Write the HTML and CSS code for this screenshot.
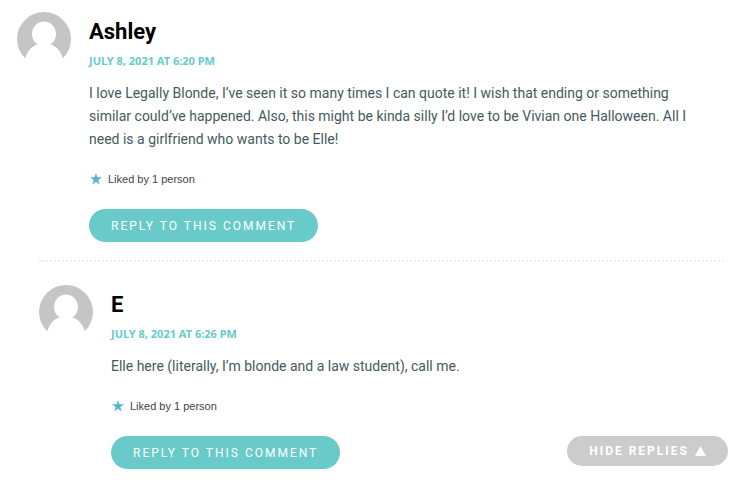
FILE: index.html
```html
<!DOCTYPE html>
<html lang="en">
<head>
  <meta charset="UTF-8">
  <meta name="viewport" content="width=device-width, initial-scale=1.0">
  <title>Comments</title>
  <link rel="stylesheet" href="styles.css">
</head>
<body>
  <article class="comment">
    <svg class="avatar" viewBox="0 0 54 54" aria-hidden="true">
      <circle cx="27" cy="27" r="27" fill="#c5c5c5"/>
      <ellipse cx="27" cy="22" rx="12" ry="12.500" fill="#fff"/>
      <path fill="#fff" d="M8 47C10 40 14 34.500 20 32.500h14C40 34.500 44 40 46 47v7H8z"/>
    </svg>
    <div class="comment-body">
      <h3 class="author">Ashley</h3>
      <a class="date" href="#">July 8, 2021 at 6:20 pm</a>
      <p class="text">I love Legally Blonde, I’ve seen it so many times I can quote it! I wish that ending or something similar could’ve happened. Also, this might be kinda silly I’d love to be Vivian one Halloween. All I need is a girlfriend who wants to be Elle!</p>
      <div class="likes">
        <svg class="star" viewBox="0 0 12 12" aria-hidden="true"><path d="M6 0l1.400 4.200H12L8.300 6.900l1.400 4.500L6 8.700l-3.700 2.700 1.400-4.500L0 4.200h4.600z"/></svg>
        <span>Liked by 1 person</span>
      </div>
      <button class="reply">Reply to this comment</button>
    </div>
  </article>

  <hr class="divider">

  <section class="replies">
    <article class="comment">
      <svg class="avatar" viewBox="0 0 54 54" aria-hidden="true">
        <circle cx="27" cy="27" r="27" fill="#c5c5c5"/>
        <ellipse cx="27" cy="22" rx="12" ry="12.500" fill="#fff"/>
        <path fill="#fff" d="M8 47C10 40 14 34.500 20 32.500h14C40 34.500 44 40 46 47v7H8z"/>
      </svg>
      <div class="comment-body">
        <h3 class="author">E</h3>
        <a class="date" href="#">July 8, 2021 at 6:26 pm</a>
        <p class="text">Elle here (literally, I’m blonde and a law student), call me.</p>
        <div class="likes">
          <svg class="star" viewBox="0 0 12 12" aria-hidden="true"><path d="M6 0l1.400 4.200H12L8.300 6.900l1.400 4.500L6 8.700l-3.700 2.700 1.400-4.500L0 4.200h4.600z"/></svg>
          <span>Liked by 1 person</span>
        </div>
        <div class="actions">
          <button class="reply">Reply to this comment</button>
          <button class="hide">Hide replies
            <svg class="arrow" viewBox="0 0 10 10" aria-hidden="true"><path d="M5 0l5 9H0z"/></svg>
          </button>
        </div>
      </div>
    </article>
  </section>
</body>
</html>
```
FILE: styles.css
```css
* {
  box-sizing: border-box;
}
body {
  margin: 0;
  padding: 12px 15px 12px 17px;
  background: #fff;
  font-family: Roboto, "Liberation Sans", sans-serif;
  color: #455a60;
}
.comment {
  display: flex;
  align-items: flex-start;
  gap: 18px;
}
.avatar {
  flex: none;
  width: 54px;
  height: 54px;
}
.comment-body {
  flex: 1;
  min-width: 0;
  padding-top: 6px;
}
.author {
  margin: 0;
  font-size: 22px;
  line-height: 28px;
  font-weight: 700;
  color: #000;
}
.date {
  display: block;
  margin-top: 8px;
  font-family: "Noto Sans", sans-serif;
  font-size: 11px;
  line-height: 14px;
  font-weight: 700;
  text-transform: uppercase;
  text-decoration: none;
  color: #66cccc;
}
.text {
  margin: 14px 0 21px;
  padding-right: 16px;
  font-size: 14px;
  line-height: 23px;
}
.likes {
  display: flex;
  align-items: center;
  gap: 6px;
  padding-left: 1px;
  font-family: "Liberation Sans", sans-serif;
  font-size: 11px;
  line-height: 14px;
  color: #444;
}
.star {
  width: 12px;
  height: 12px;
  fill: #5bb0d6;
}
button {
  border: none;
  border-radius: 17px;
  font-family: Roboto, sans-serif;
  font-size: 12px;
  letter-spacing: 2px;
  text-transform: uppercase;
  color: #fff;
  cursor: pointer;
}
.reply {
  height: 33px;
  margin-top: 23px;
  padding: 0 22px;
  background: #68cbca;
}
.divider {
  margin: 18px 4px 23px 22px;
  border: none;
  border-top: 2px dotted #eee;
}
.replies {
  margin-left: 22px;
}
.actions {
  display: flex;
  justify-content: space-between;
  align-items: flex-start;
  margin-top: 23px;
}
.actions .reply {
  margin-top: 0;
}
.hide {
  display: flex;
  align-items: center;
  gap: 6px;
  height: 30px;
  padding: 0 22px;
  font-weight: 700;
  background: #ccc;
}
.arrow {
  width: 11px;
  height: 11px;
  fill: #fff;
}
```
